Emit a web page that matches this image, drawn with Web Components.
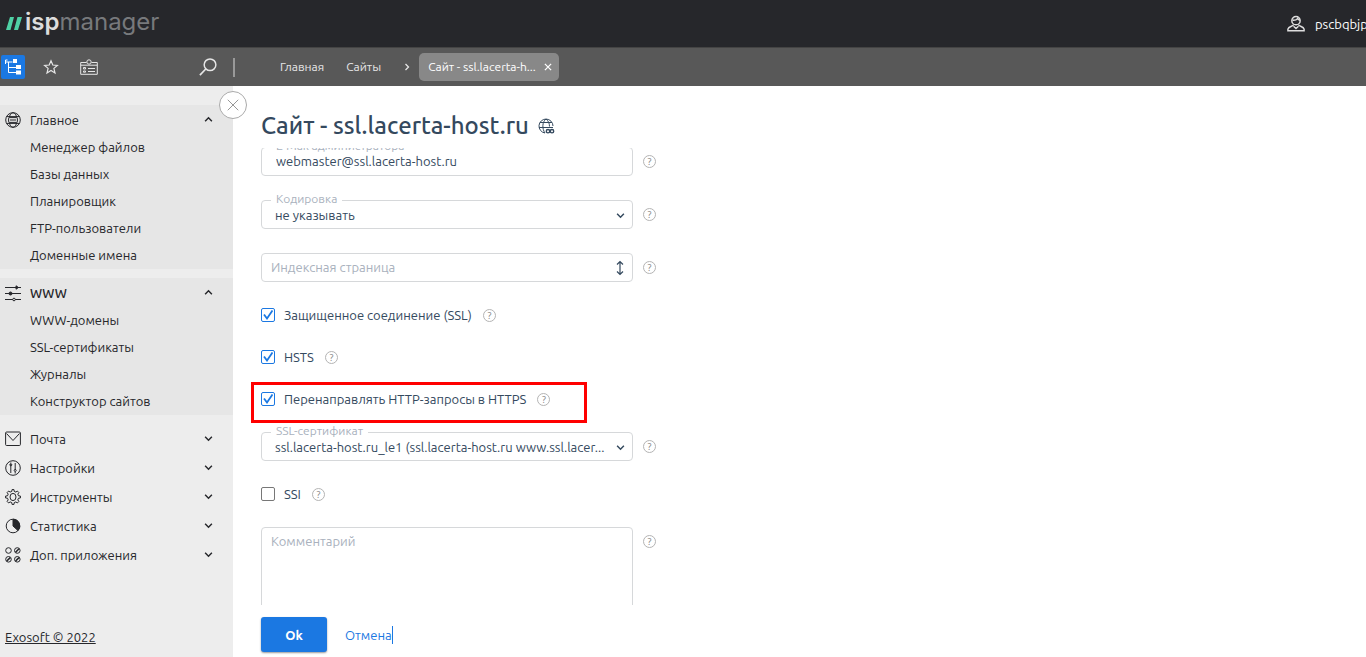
<!DOCTYPE html>
<html lang="ru">
<head>
<meta charset="utf-8">
<title>ispmanager</title>
<style>
  html, body { margin: 0; height: 100%; }
  body { font: 13px/18px Ubuntu, "Noto Sans", sans-serif; color: #34495e; background: #fff; }
</style>
</head>
<body>
<panel-app></panel-app>

<script>
const ICONS = {
  globe: '<circle cx="8" cy="8" r="7.3"/><ellipse cx="8" cy="8" rx="4" ry="7.3"/><path d="M1.6 4.6h12.8M1.6 11.4h12.8"/><rect x="3.6" y="5.6" width="8.8" height="4.8" rx="1" fill="#e6e6e6"/><path d="M6 7v2M8 7v2M10 7v2"/>',
  sliders: '<path d="M0 2.500h16M0 8.500h16M0 14.500h16"/><path d="M11 .8l2.500 1.700L11 4.200z" fill="currentColor"/><circle cx="5.500" cy="8.500" r="1.500" fill="currentColor"/><circle cx="9" cy="14.500" r="1.300" fill="#e6e6e6"/>',
  mail: '<rect x=".6" y="1" width="14.800" height="13.500" rx="1"/><path d="M1.500 2.500L8 9.500l6.500-7"/>',
  tune: '<circle cx="8" cy="8" r="7.300"/><path d="M5.800 4v9M5.800 2.500v1M10.200 3v7M10.200 12v1.500"/><circle cx="5.800" cy="4.800" r="1"/><circle cx="10.200" cy="10.500" r="1"/>',
  gear: '<path d="M6.8 2.400L7 .6h2l.2 1.800 1.700.7L12.300 2l1.600 1.600-1.100 1.500.7 1.700 1.900.2v2l-1.900.2-.7 1.700 1.100 1.500-1.600 1.600-1.400-1.100-1.700.7L9 15.400H7l-.2-1.800-1.700-.7L3.700 14l-1.600-1.600 1.100-1.500-.7-1.700L.6 9V7l1.900-.2.7-1.700-1.100-1.500L3.700 2l1.400 1.100z"/><ellipse cx="8" cy="8" rx="3" ry="3.600"/>',
  pie: '<circle cx="8" cy="8" r="6.800"/><path d="M8 8V1.200A6.800 6.800 0 0 1 13 12.600z" fill="currentColor"/>',
  apps: '<circle cx="3.500" cy="3.500" r="2.800"/><circle cx="12.300" cy="3.500" r="2.800"/><circle cx="3.500" cy="12.300" r="2.800"/><circle cx="12.300" cy="12.300" r="2.800"/><g stroke-width="1.600"><path d="M10.600 5.200l3.400-3.400M1.800 14L5.200 10.600M10.600 14l3.400-3.400"/></g>',
  tree: '<path d="M.5 1v4M.5 3h7M3.500 3v10.500h8M3.500 8.500h8M.5 1h2"/><g fill="currentColor" stroke="none"><rect x="8" y="0" width="4" height="4"/><rect x="11" y="6" width="5" height="4"/><rect x="11" y="11.500" width="5" height="4"/></g>',
  star: '<path d="M8 1.800l1.800 4.200 4.600.4-3.500 3 1.100 4.500L8 11.500l-4 2.400 1.100-4.500-3.500-3 4.600-.4z" stroke-width="1.200"/>',
  board: '<path d="M5.500 3.500H-.3v11.800h16.600V3.500h-5.800M-.3 6.200h16.600"/><circle cx="8" cy="3" r="2.200"/><path d="M2.500 8.500h2v1.500h-2zM2.500 12h2v1.200h-2zM7 9.500h7M7 12.500h7"/>',
  search: '<circle cx="9.800" cy="6" r="5.200" stroke-width="1.300"/><path d="M6 9.800L.8 15.200" stroke-width="1.500"/>',
  user: '<circle cx="8" cy="5" r="3.700" stroke-width="1.300"/><path d="M5 4.500c2 .5 4-.6 4.500-1.500.5 1 1 1.500 2 1.700M5.800 8.500c0 1.500-4.500 1.500-5 4v1.500h14.400v-1.500c-.5-2.500-5-2.500-5-4M5.800 10l2.200 2 2.200-2" stroke-width="1.300"/>',
  weblink: '<path d="M7 15A7 7 0 1 1 15 8M8 1C4 4 4 11 7 15M8 1c2.500 2 3.500 4.500 3.500 7.500M2 4.500h12M1 9.500h14"/><g stroke-width="1.400"><circle cx="10" cy="13.200" r="1.700"/><circle cx="14" cy="13.200" r="1.700"/></g>',
  cross: '<path d="M2 2l12 12M14 2L2 14"/>',
  close: '<path d="M3 3l10 10M13 3L3 13" stroke-width="2"/>',
  up: '<path d="M2 11l6-6 6 6" stroke-width="2.600"/>',
  down: '<path d="M2 5l6 6 6-6" stroke-width="2.600"/>',
  right: '<path d="M5 2l6 6-6 6" stroke-width="2.600"/>',
  updown: '<path d="M8 1.500v13M5 4.500l3-3 3 3M5 11.500l3 3 3-3" stroke-width="1.200"/>',
};

function define(name, css, html, setup) {
  const template = document.createElement('template');
  template.innerHTML = `<style>*,::after{box-sizing:border-box}${css}</style>${html}`;
  customElements.define(name, class extends HTMLElement {
    connectedCallback() {
      if (this.shadowRoot) return;
      const root = this.attachShadow({ mode: 'open' });
      root.append(template.content.cloneNode(true));
      if (setup) setup(this, root);
    }
  });
}

define('ui-icon',
  `:host{display:inline-block;width:16px;height:16px;flex:none}
   svg{display:block;width:100%;height:100%;overflow:visible}`,
  `<svg viewBox="0 0 16 16" fill="none" stroke="currentColor" stroke-width="1" aria-hidden="true"></svg>`,
  (host, root) => { root.querySelector('svg').innerHTML = ICONS[host.getAttribute('name')]; });

define('help-mark',
  `:host{display:block;flex:none}
   button{display:grid;place-items:center;width:13px;height:13px;padding:0;border:1px solid #b4b4b4;border-radius:50%;background:#fff;color:#888;font:9px/11px "Noto Sans",sans-serif}`,
  `<button type="button">?</button>`);

define('top-bar',
  `:host{display:flex;align-items:center;height:47px;flex:none;background:#26272b;overflow:hidden}
   .logo{display:flex;align-items:center;gap:2px;padding-left:6px;font:24px/30px Inter,sans-serif;color:#77797c;text-decoration:none;margin-top:-3px}
   .logo svg{width:17px;height:13px;margin-top:3px}
   b{font-weight:600;color:#dcdcdc}
   .user{display:flex;align-items:center;gap:10px;width:79px;margin-left:auto;border:0;background:none;padding:0;color:#fff;font:inherit;white-space:nowrap}
   ui-icon{width:18px;height:18px;color:#ddd}`,
  `<a class="logo" href="#"><svg viewBox="0 0 17 13"><path d="M4 0h4L4.500 13H0zM11.500 0H16l-4 13H8z" fill="#4fd1a5"/></svg><span><b>isp</b>manager</span></a>
   <button class="user" type="button"><ui-icon name="user"></ui-icon><span>pscbqbjp</span></button>`);

define('tool-bar',
  `:host{display:flex;align-items:center;height:39px;flex:none;background:#585858;color:#e6e6e6;font-size:12px;border-top:1px solid #444}
   .tools{display:flex;align-items:center;width:233px;height:28px;padding-left:1px}
   button{display:grid;place-items:center;padding:0;border:0;background:none;color:inherit;font:inherit}
   .tool{width:24px;height:24px;margin-right:14px}
   .tool.on{background:#1b78e2;color:#fff;border-radius:2px}
   .find{margin-left:auto;margin-right:16px}
   .find ui-icon{width:18px;height:18px}
   .bar{width:2px;height:19px;background:#999}
   nav{display:flex;align-items:center;padding-left:45px}
   nav a{color:inherit;text-decoration:none;margin-right:22px}
   .sep{width:8px;height:8px;margin-right:8px}
   .tab{display:flex;align-items:center;justify-content:space-between;width:140px;height:28px;padding:0 6px 0 9px;border-radius:5px;background:#888;color:#fff}
   .tab ui-icon{width:10px;height:10px}`,
  `<div class="tools">
     <button class="tool on" aria-label="Меню"><ui-icon name="tree"></ui-icon></button>
     <button class="tool" aria-label="Избранное"><ui-icon name="star"></ui-icon></button>
     <button class="tool" aria-label="Панель"><ui-icon name="board"></ui-icon></button>
     <button class="find" aria-label="Поиск"><ui-icon name="search"></ui-icon></button>
   </div><div class="bar"></div>
   <nav><a href="#">Главная</a><a href="#">Сайты</a><ui-icon class="sep" name="right"></ui-icon>
   <div class="tab"><span>Сайт - ssl.lacerta-h...</span><button aria-label="Закрыть"><ui-icon name="close"></ui-icon></button></div></nav>`);

define('menu-item',
  `:host{display:block}
   a{display:block;height:27px;padding-left:30px;line-height:26px;color:inherit;text-decoration:none}`,
  `<a href="#"><slot></slot></a>`);

define('menu-group',
  `:host{display:block}
   :host([open]){background:#e6e6e6;margin-bottom:9px}
   button{display:flex;align-items:center;width:100%;height:29px;padding:0 20px 0 5px;border:0;background:none;color:inherit;font:inherit;text-align:left}
   :host([strong]) span{font-weight:500}
   span{flex:1;margin-left:9px}
   .arrow{width:9px;height:9px}`,
  `<button type="button"></button><slot></slot>`,
  (host, root) => {
    root.querySelector('button').innerHTML =
      `<ui-icon name="${host.getAttribute('icon')}"></ui-icon><span>${host.getAttribute('heading')}</span>
       <ui-icon class="arrow" name="${host.hasAttribute('open') ? 'up' : 'down'}"></ui-icon>`;
  });

define('side-menu',
  `:host{display:flex;flex-direction:column;position:relative;width:233px;flex:none;padding-top:19px;background:#ededed;color:#26272b}
   .foot{margin-top:auto;padding:0 5px 11px}
   .foot a{color:inherit}
   .hide{position:absolute;top:5px;right:-14px;display:grid;place-items:center;width:28px;height:28px;padding:0;border:1px solid #aaa;border-radius:50%;background:#fff;color:#888}
   .hide ui-icon{width:14px;height:14px}`,
  `<menu-group icon="globe" heading="Главное" open>
     <menu-item>Менеджер файлов</menu-item><menu-item>Базы данных</menu-item><menu-item>Планировщик</menu-item><menu-item>FTP-пользователи</menu-item><menu-item>Доменные имена</menu-item>
   </menu-group>
   <menu-group icon="sliders" heading="WWW" open strong>
     <menu-item>WWW-домены</menu-item><menu-item>SSL-сертификаты</menu-item><menu-item>Журналы</menu-item><menu-item>Конструктор сайтов</menu-item>
   </menu-group>
   <menu-group icon="mail" heading="Почта"></menu-group>
   <menu-group icon="tune" heading="Настройки"></menu-group>
   <menu-group icon="gear" heading="Инструменты"></menu-group>
   <menu-group icon="pie" heading="Статистика"></menu-group>
   <menu-group icon="apps" heading="Доп. приложения"></menu-group>
   <div class="foot"><a href="#">Exosoft © 2022</a></div>
   <button class="hide" type="button" aria-label="Скрыть меню"><ui-icon name="cross"></ui-icon></button>`);

const FIELD = `:host{display:flex;align-items:center;gap:10px}
   .box{position:relative;width:372px;height:29px}
   label{position:absolute;left:10px;top:-10px;padding:0 5px;background:#fff;color:#a9b1bd;font-size:12px;line-height:18px}
   input,select,textarea{display:block;width:100%;height:100%;margin:0;padding:0 14px;border:1px solid #d6d8da;border-radius:4px;background:#fff;color:#34495e;font:inherit;outline:0}
   input{padding-bottom:2px}
   ::placeholder{color:#a9b1bd;opacity:1}
   ui-icon{position:absolute;right:8px;top:11px;width:9px;height:9px;pointer-events:none}`;

define('text-field', FIELD + `
   :host([hint]) input{padding:0 9px 2px}
   ui-icon{right:5px;top:7px;width:16px;height:16px}`,
  `<div class="box"><input id="f" type="text"></div><help-mark></help-mark>`,
  (host, root) => {
    const input = root.querySelector('input'), box = root.querySelector('.box');
    input.value = host.getAttribute('value') || '';
    if (host.hasAttribute('hint')) {
      input.placeholder = host.getAttribute('hint');
      input.setAttribute('aria-label', input.placeholder);
      box.insertAdjacentHTML('beforeend', '<ui-icon name="updown"></ui-icon>');
    } else {
      box.insertAdjacentHTML('beforeend', `<label for="f">${host.getAttribute('label')}</label>`);
    }
  });

define('select-field', FIELD + `select{appearance:none;padding:0 13px}`,
  `<div class="box"><select id="f"><option></option></select><label for="f"></label><ui-icon name="down"></ui-icon></div><help-mark></help-mark>`,
  (host, root) => {
    root.querySelector('option').textContent = host.getAttribute('value');
    root.querySelector('label').textContent = host.getAttribute('label');
  });

define('area-field', FIELD + `
   :host{align-items:flex-start}
   .box{height:96px}
   textarea{resize:none;padding:4px 9px}
   help-mark{margin-top:8px}`,
  `<div class="box"><textarea></textarea></div><help-mark></help-mark>`,
  (host, root) => {
    const area = root.querySelector('textarea');
    area.placeholder = host.getAttribute('hint');
    area.setAttribute('aria-label', area.placeholder);
  });

define('check-field',
  `:host{display:flex;align-items:center;gap:11px;height:18px;position:relative}
   :host([marked])::after{content:"";box-sizing:border-box;position:absolute;left:-10px;top:-8px;width:336px;height:41px;border:3px solid #f00;z-index:1;pointer-events:none}
   label{display:flex;align-items:center;gap:9px}
   input{appearance:none;display:block;width:14px;height:14px;margin:0;border:1px solid #777;border-radius:2px;background:#fff}
   input:checked{border-color:#1b78e2}
   .tick{position:relative;display:block}
   svg{display:none;position:absolute;left:2px;top:2px;width:10px;height:10px;pointer-events:none}
   input:checked + svg{display:block}`,
  `<label><span class="tick"><input type="checkbox"><svg viewBox="0 0 10 10"><path d="M1 4.500l3 4L9.500.5" fill="none" stroke="#1b78e2" stroke-width="1.800"/></svg></span><slot></slot></label><help-mark></help-mark>`,
  (host, root) => { root.querySelector('input').checked = host.hasAttribute('checked'); });

define('site-form',
  `:host{display:flex;flex-direction:column;flex:1;min-width:0;padding:24px 0 5px 28px}
   h1{display:flex;align-items:center;gap:9px;margin:0;height:38px;flex:none;padding-bottom:6px;font-size:24px;line-height:32px;font-weight:500}
   .scroll{flex:1;min-height:0;overflow:hidden;margin-left:-12px;padding-left:12px}
   form{display:flex;flex-direction:column;gap:24px;padding-top:16px}
   .actions{display:flex;align-items:center;gap:18px;flex:none;padding-top:12px}
   button{width:66px;height:35px;border:0;border-radius:3px;background:#1b78e2;color:#fff;font:inherit;font-weight:600;box-shadow:0 1px 2px #0006}
   .cancel{color:#1b78e2;text-decoration:none;border-right:1px solid #1b78e2}`,
  `<h1><span>Сайт - ssl.lacerta-host.ru</span><ui-icon name="weblink"></ui-icon></h1>
   <div class="scroll"><form id="site">
     <text-field label="E-Mail администратора" value="webmaster@ssl.lacerta-host.ru"></text-field>
     <select-field label="Кодировка" value="не указывать"></select-field>
     <text-field hint="Индексная страница"></text-field>
     <check-field checked>Защищенное соединение (SSL)</check-field>
     <check-field checked>HSTS</check-field>
     <check-field checked marked>Перенаправлять HTTP-запросы в HTTPS</check-field>
     <select-field label="SSL-сертификат" value="ssl.lacerta-host.ru_le1 (ssl.lacerta-host.ru www.ssl.lacer..."></select-field>
     <check-field>SSI</check-field>
     <area-field hint="Комментарий"></area-field>
   </form></div>
   <div class="actions"><button type="submit" form="site">Ok</button><a class="cancel" href="#">Отмена</a></div>`);

define('panel-app',
  `:host{display:flex;flex-direction:column;height:100vh;overflow:hidden}
   main{display:flex;flex:1;min-height:0}`,
  `<top-bar></top-bar><tool-bar></tool-bar><main><side-menu></side-menu><site-form></site-form></main>`,
  (host, root) => { root.querySelector('site-form').shadowRoot.querySelector('.scroll').scrollTop = 17; });
</script>
</body>
</html>
